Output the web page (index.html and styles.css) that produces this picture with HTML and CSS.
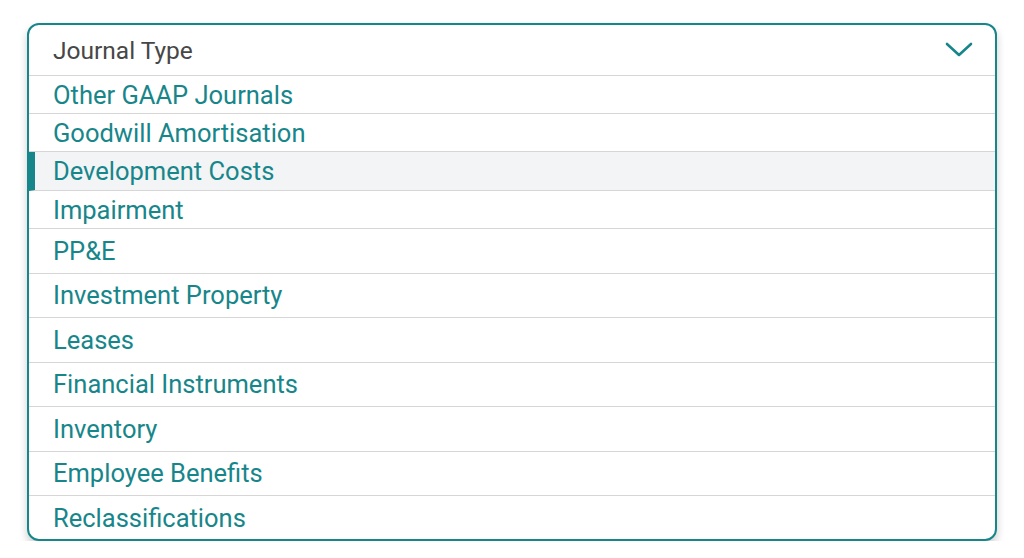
FILE: index.html
```html
<!DOCTYPE html>
<html lang="en">
<head>
    <meta charset="UTF-8">
    <meta name="viewport" content="width=device-width, initial-scale=1.0">
    <title>Journal Type</title>
    <link rel="stylesheet" href="styles.css">
</head>
<body>
    <div class="dropdown">
        <div class="dropdown-header">
            <span class="dropdown-label">Journal Type</span>
            <svg class="chevron" width="28" height="16" viewBox="0 0 28 16">
                <polyline points="2,2 14,13 26,2" fill="none" stroke="#17868a" stroke-width="2.6" stroke-linecap="round" stroke-linejoin="round"/>
            </svg>
        </div>
        <ul class="options">
            <li class="option compact">Other GAAP Journals</li>
            <li class="option compact">Goodwill Amortisation</li>
            <li class="option compact active">Development Costs</li>
            <li class="option compact">Impairment</li>
            <li class="option">PP&amp;E</li>
            <li class="option">Investment Property</li>
            <li class="option">Leases</li>
            <li class="option">Financial Instruments</li>
            <li class="option">Inventory</li>
            <li class="option">Employee Benefits</li>
            <li class="option last">Reclassifications</li>
        </ul>
    </div>
</body>
</html>
```

FILE: styles.css
```css
/* Reset default margin and padding */
* {
    margin: 0;
    padding: 0;
    box-sizing: border-box;
}

body {
    font-family: Roboto, "Liberation Sans", sans-serif;
    background-color: #FFF;
    color: #444;
    padding: 23px 0 0 27px;
}

.dropdown {
    width: 970px;
    border: 2px solid #17868a;
    border-radius: 12px;
    background-color: #FFF;
    overflow: hidden;
    box-shadow: 0 5px 9px rgba(0, 0, 0, 0.2);
}

.dropdown-header {
    height: 51px;
    display: flex;
    justify-content: space-between;
    align-items: center;
    padding: 0 22px 0 24px;
    border-bottom: 1px solid #D6D6D6;
}

.dropdown-label {
    font-size: 24.5px;
    color: #474747;
}

.chevron {
    display: block;
}

.options {
    list-style: none;
}

.option {
    height: 44.5px;
    display: flex;
    align-items: center;
    padding-left: 24px;
    font-size: 25.5px;
    color: #17868a;
    border-bottom: 1px solid #D6D6D6;
}

.option.compact {
    height: 38px;
}

.option.active {
    height: 39px;
    background-color: #F2F4F6;
    border-left: 6px solid #17868a;
    padding-left: 18px;
}

.option.last {
    border-bottom: none;
    height: 43px;
}
```
